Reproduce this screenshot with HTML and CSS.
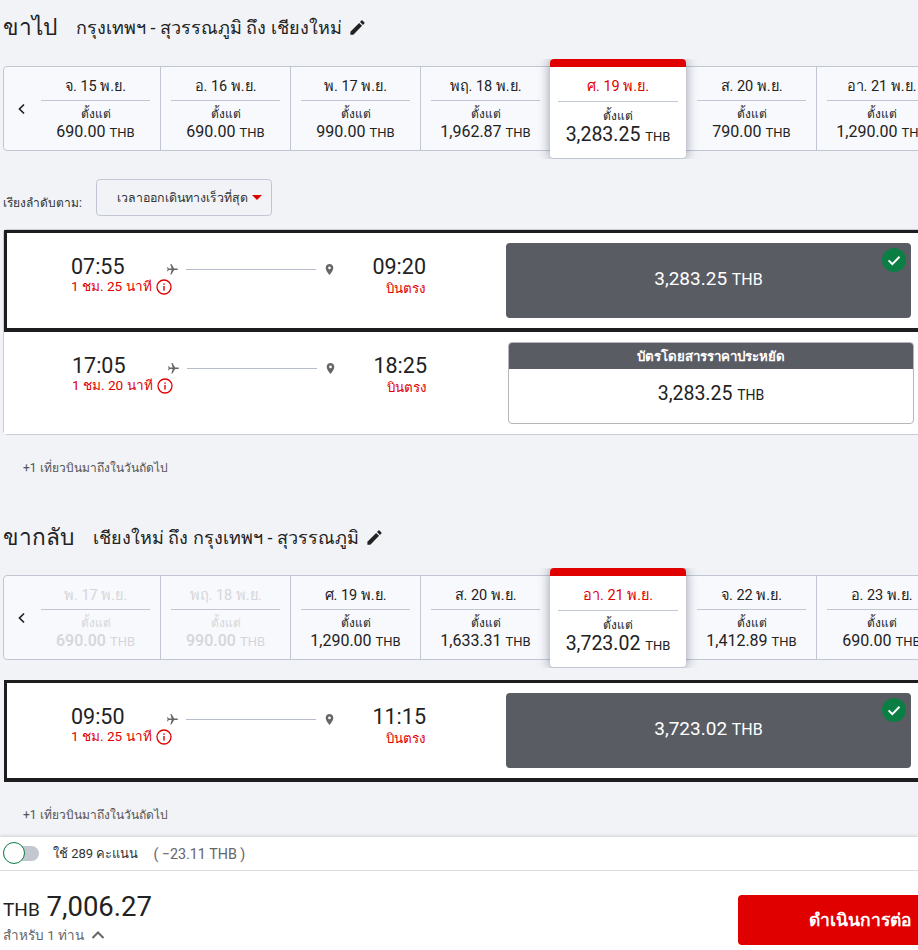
FILE: index.html
```html
<!DOCTYPE html>
<html lang="th">
<head>
<meta charset="utf-8">
<title>เลือกเที่ยวบิน</title>
<link rel="stylesheet" href="styles.css">
</head>
<body>
<svg class="defs" width="0" height="0">
	<symbol id="edit" viewBox="0 0 24 24"><path d="M3 17.25V21h3.75L17.81 9.94l-3.75-3.75L3 17.25zM20.71 7.04a1 1 0 0 0 0-1.41l-2.34-2.34a1 1 0 0 0-1.41 0l-1.83 1.83 3.75 3.75 1.83-1.83z"/></symbol>
	<symbol id="plane" viewBox="0 0 24 24"><path d="M21 16v-2l-8-5V3.5a1.5 1.5 0 0 0-3 0V9l-8 5v2l8-2.5V19l-2 1.5V22l3.5-1 3.5 1v-1.5L13 19v-5.5l8 2.5z" transform="rotate(90 12 12)"/></symbol>
	<symbol id="pin" viewBox="0 0 24 24"><path d="M12 2C8.13 2 5 5.13 5 9c0 5.25 7 13 7 13s7-7.75 7-13c0-3.87-3.13-7-7-7zm0 9.5a2.5 2.5 0 1 1 0-5 2.5 2.5 0 0 1 0 5z"/></symbol>
	<symbol id="info" viewBox="0 0 16 16"><circle cx="8" cy="8" r="7" fill="none" stroke="currentColor" stroke-width="1.3"/><rect x="7.3" y="7" width="1.4" height="4.6" fill="currentColor"/><rect x="7.3" y="4.4" width="1.4" height="1.4" fill="currentColor"/></symbol>
	<symbol id="check" viewBox="0 0 24 24"><circle cx="12" cy="12" r="12" fill="#0b7e43"/><path d="M6.6 12.4l3.7 3.7 7.2-7.4" fill="none" stroke="#fff" stroke-width="2"/></symbol>
</svg>

<div class="page">
	<h2 class="leg-title"><span class="leg-name">ขาไป</span><span class="leg-route">กรุงเทพฯ - สุวรรณภูมิ ถึง เชียงใหม่</span><svg class="edit-icon"><use href="#edit"/></svg></h2>

	<div class="strip">
		<div class="prev"><svg width="12" height="12" viewBox="0 0 12 12"><path d="M8 1.5L3.5 6 8 10.5" fill="none" stroke="#222" stroke-width="1.7"/></svg></div>
		<div class="day first"><div class="day-date">จ. 15 พ.ย.</div><div class="day-from">ตั้งแต่</div><div class="day-price">690.00 <small>THB</small></div></div>
		<div class="day"><div class="day-date">อ. 16 พ.ย.</div><div class="day-from">ตั้งแต่</div><div class="day-price">690.00 <small>THB</small></div></div>
		<div class="day"><div class="day-date">พ. 17 พ.ย.</div><div class="day-from">ตั้งแต่</div><div class="day-price">990.00 <small>THB</small></div></div>
		<div class="day before-sel"><div class="day-date">พฤ. 18 พ.ย.</div><div class="day-from">ตั้งแต่</div><div class="day-price">1,962.87 <small>THB</small></div></div>
		<div class="day selected"><div class="day-date">ศ. 19 พ.ย.</div><div class="day-from">ตั้งแต่</div><div class="day-price">3,283.25 <small>THB</small></div></div>
		<div class="day"><div class="day-date">ส. 20 พ.ย.</div><div class="day-from">ตั้งแต่</div><div class="day-price">790.00 <small>THB</small></div></div>
		<div class="day"><div class="day-date">อา. 21 พ.ย.</div><div class="day-from">ตั้งแต่</div><div class="day-price">1,290.00 <small>THB</small></div></div>
	</div>

	<div class="sort">
		<span class="sort-label">เรียงลำดับตาม:</span>
		<div class="sort-box">เวลาออกเดินทางเร็วที่สุด<i class="caret"></i></div>
	</div>

	<div class="flights">
		<div class="flight active">
			<div class="flight-info">
				<div class="dep"><div class="time">07:55</div><div class="dur">1 ชม. 25 นาที<svg class="info"><use href="#info"/></svg></div></div>
				<div class="route"><svg class="plane"><use href="#plane"/></svg><i class="route-line"></i><svg class="pin"><use href="#pin"/></svg></div>
				<div class="arr"><div class="time">09:20</div><div class="direct">บินตรง</div></div>
			</div>
			<div class="fare fare-on">3,283.25 <small>THB</small><svg class="tick"><use href="#check"/></svg></div>
		</div>
		<div class="flight plain">
			<div class="flight-info">
				<div class="dep"><div class="time">17:05</div><div class="dur">1 ชม. 20 นาที<svg class="info"><use href="#info"/></svg></div></div>
				<div class="route"><svg class="plane"><use href="#plane"/></svg><i class="route-line"></i><svg class="pin"><use href="#pin"/></svg></div>
				<div class="arr"><div class="time">18:25</div><div class="direct">บินตรง</div></div>
			</div>
			<div class="fare-card"><div class="fare-head">บัตรโดยสารราคาประหยัด</div><div class="fare-body">3,283.25 <small>THB</small></div></div>
		</div>
	</div>
	<p class="note">+1 เที่ยวบินมาถึงในวันถัดไป</p>

	<h2 class="leg-title second"><span class="leg-name">ขากลับ</span><span class="leg-route">เชียงใหม่ ถึง กรุงเทพฯ - สุวรรณภูมิ</span><svg class="edit-icon"><use href="#edit"/></svg></h2>

	<div class="strip">
		<div class="prev"><svg width="12" height="12" viewBox="0 0 12 12"><path d="M8 1.5L3.5 6 8 10.5" fill="none" stroke="#222" stroke-width="1.7"/></svg></div>
		<div class="day first off"><div class="day-date">พ. 17 พ.ย.</div><div class="day-from">ตั้งแต่</div><div class="day-price">690.00 <small>THB</small></div></div>
		<div class="day off"><div class="day-date">พฤ. 18 พ.ย.</div><div class="day-from">ตั้งแต่</div><div class="day-price">990.00 <small>THB</small></div></div>
		<div class="day"><div class="day-date">ศ. 19 พ.ย.</div><div class="day-from">ตั้งแต่</div><div class="day-price">1,290.00 <small>THB</small></div></div>
		<div class="day before-sel"><div class="day-date">ส. 20 พ.ย.</div><div class="day-from">ตั้งแต่</div><div class="day-price">1,633.31 <small>THB</small></div></div>
		<div class="day selected"><div class="day-date">อา. 21 พ.ย.</div><div class="day-from">ตั้งแต่</div><div class="day-price">3,723.02 <small>THB</small></div></div>
		<div class="day"><div class="day-date">จ. 22 พ.ย.</div><div class="day-from">ตั้งแต่</div><div class="day-price">1,412.89 <small>THB</small></div></div>
		<div class="day"><div class="day-date">อ. 23 พ.ย.</div><div class="day-from">ตั้งแต่</div><div class="day-price">690.00 <small>THB</small></div></div>
	</div>

	<div class="flights solo">
		<div class="flight active">
			<div class="flight-info">
				<div class="dep"><div class="time">09:50</div><div class="dur">1 ชม. 25 นาที<svg class="info"><use href="#info"/></svg></div></div>
				<div class="route"><svg class="plane"><use href="#plane"/></svg><i class="route-line"></i><svg class="pin"><use href="#pin"/></svg></div>
				<div class="arr"><div class="time">11:15</div><div class="direct">บินตรง</div></div>
			</div>
			<div class="fare fare-on">3,723.02 <small>THB</small><svg class="tick"><use href="#check"/></svg></div>
		</div>
	</div>
	<p class="note">+1 เที่ยวบินมาถึงในวันถัดไป</p>

	<div class="footer">
		<div class="points">
			<span class="toggle"><i class="knob"></i></span>
			<span class="points-text">ใช้ 289 คะแนน</span>
			<span class="points-value">( −23.11 THB )</span>
		</div>
		<div class="total">
			<div>
				<div class="total-price"><small>THB</small> 7,006.27</div>
				<div class="total-for">สำหรับ 1 ท่าน<svg width="14" height="10" viewBox="0 0 14 10"><path d="M1.5 8L7 2.5 12.5 8" fill="none" stroke="#666" stroke-width="2"/></svg></div>
			</div>
			<div class="go">ดำเนินการต่อ</div>
		</div>
	</div>
</div>
</body>
</html>
```

FILE: styles.css
```css
html, body {
	margin: 0;
	height: 950px;
	overflow: hidden;
}
body {
	font-family: Roboto, "Noto Sans", "Noto Sans CJK SC", sans-serif;
	color: #222;
	background-color: #f1f3f7;
}
.defs {
	display: block;
}
.page {
	width: 918px;
	height: 950px;
	overflow: hidden;
}
/* headings */
.leg-title {
	display: flex;
	align-items: center;
	height: 30px;
	margin: 0;
	padding: 12px 0 0 3px;
	font-weight: normal;
}
.leg-title.second {
	margin-top: 33px;
}
.leg-name {
	font-size: 22.7px;
	margin-right: 19px;
}
.leg-route {
	font-size: 18px;
}
.edit-icon {
	width: 19px;
	height: 19px;
	margin-left: 6px;
	fill: #222;
}
/* date strip */
.strip {
	display: flex;
	width: 960px;
	height: 85px;
	box-sizing: border-box;
	margin: 24px 0 0 3px;
	background-color: #f8f9fd;
	border: 1px solid #c1c7d2;
	border-radius: 4px 0 0 4px;
}
.second + .strip {
	margin-top: 23px;
}
.prev {
	flex: none;
	width: 37px;
	display: flex;
	align-items: center;
	justify-content: center;
	box-sizing: border-box;
	padding-right: 2px;
}
.day {
	flex: none;
	width: 130px;
	box-sizing: border-box;
	padding: 0 10px;
	border-right: 1px solid #c1c7d2;
	text-align: center;
}
.day.first {
	width: 120px;
	padding: 0 10px 0 0;
}
.day.before-sel {
	width: 129px;
	border-right: 0;
}
.day-date {
	height: 33px;
	line-height: 40px;
	font-size: 14.5px;
	border-bottom: 1px solid #c1c7d2;
}
.day-from {
	margin-top: 5px;
	font-size: 12px;
	line-height: 17px;
}
.day-price {
	font-size: 16px;
	line-height: 17px;
}
.day-price small {
	font-size: 13px;
}
.day.off {
	color: #d5d6d9;
}
.day.off .day-price {
	font-weight: 500;
}
.day.off .day-price small {
	font-weight: 400;
}
.day.selected {
	position: relative;
	width: 136px;
	height: 100px;
	margin: -8px 1px 0 0;
	padding: 8px 8px 0;
	background-color: #fff;
	border: 0;
	border-radius: 4px;
	box-shadow: 0 0 12px rgba(60, 70, 90, .55);
	clip-path: inset(0 -20px);
	border-bottom: 1px solid #c1c7d2;
}
.day.selected::before {
	content: "";
	display: block;
	height: 8px;
	margin: -8px -8px 0;
	background-color: #e00000;
	border-radius: 4px 4px 0 0;
}
.selected .day-date {
	color: #e00000;
	height: 34px;
	line-height: 40px;
}
.selected .day-from {
	margin-top: 6px;
}
.selected .day-price {
	font-size: 19.5px;
	line-height: 20px;
}
/* sort */
.sort {
	display: flex;
	align-items: center;
	margin: 28px 0 0 3px;
	height: 37px;
}
.sort-label {
	width: 93px;
	padding-top: 9px;
	font-size: 12px;
	color: #333;
}
.sort-box {
	height: 37px;
	width: 176px;
	box-sizing: border-box;
	border: 1px solid #c1c7d2;
	border-radius: 4px;
	padding-left: 20px;
	line-height: 35px;
	font-size: 12.4px;
	color: #333;
	white-space: nowrap;
}
.caret {
	display: inline-block;
	margin-left: 4px;
	vertical-align: 2px;
	border: 5px solid transparent;
	border-top: 5px solid #e00000;
	border-bottom: 0;
}
/* flights */
.flights {
	width: 930px;
	margin: 13px 0 0 3px;
	background-color: #fff;
	border: 1px solid #c9ccd2;
	border-radius: 4px;
}
.flights.solo {
	border: 0;
	margin-top: 20px;
	background-color: transparent;
}
.flight {
	display: flex;
	height: 102px;
	box-sizing: border-box;
	background-color: #fff;
}
.flight.active {
	border: 3px solid #1d1d1f;
	border-bottom-width: 4px;
	padding: 10px 0 0 64px;
}
.solo .flight.active {
	margin-left: 1px;
}
.flight.plain {
	padding: 10px 0 0 68px;
}
.flight-info {
	display: flex;
	width: 355px;
	height: 61px;
	padding-top: 12px;
}
.dep {
	width: 95px;
}
.time {
	font-size: 21.5px;
	line-height: 23px;
}
.dur {
	display: flex;
	align-items: center;
	font-size: 13.6px;
	line-height: 17px;
	color: #e00000;
	white-space: nowrap;
}
.info {
	width: 16px;
	height: 16px;
	margin-left: 4px;
	color: #e00000;
	flex: none;
}
.route {
	display: flex;
	align-items: center;
	height: 24px;
	width: 170px;
	margin-top: 2px;
	color: #666;
}
.plane {
	width: 13px;
	height: 13px;
	margin-right: 7px;
	fill: #666;
	flex: none;
}
.route-line {
	flex: none;
	width: 130px;
	height: 1px;
	background-color: #b6bccb;
}
.pin {
	width: 13px;
	height: 13px;
	margin-left: 7px;
	fill: #666;
	flex: none;
}
.arr {
	margin-left: auto;
	text-align: right;
}
.direct {
	font-size: 13.4px;
	line-height: 21px;
	color: #e00000;
}
.fare {
	position: relative;
	margin: 0 0 0 80px;
	width: 405px;
	height: 75px;
	border-radius: 4px;
	text-align: center;
	line-height: 71px;
	font-size: 19px;
	flex: none;
}
.fare small {
	font-size: 16px;
}
.fare-on {
	background-color: #5a5c64;
	color: #fff;
}
.tick {
	position: absolute;
	top: 5px;
	right: 5px;
	width: 24px;
	height: 24px;
}
.fare-card {
	flex: none;
	width: 406px;
	height: 82px;
	box-sizing: border-box;
	margin-left: 81px;
	border: 1px solid #b4b6ba;
	border-radius: 4px;
	overflow: hidden;
	text-align: center;
}
.fare-head {
	height: 26px;
	line-height: 27px;
	background-color: #5a5c64;
	color: #fff;
	font-size: 13.3px;
	font-weight: bold;
}
.fare-body {
	font-size: 19.5px;
	line-height: 50px;
}
.fare-body small {
	font-size: 14px;
}
.note {
	margin: 25px 0 0 23px;
	font-size: 12px;
	line-height: 17px;
	color: #555;
}
/* footer */
.footer {
	margin-top: 13px;
	background-color: #fff;
	height: 114px;
	box-shadow: 0 -1px 3px rgba(0, 0, 0, .15);
}
.points {
	display: flex;
	align-items: center;
	height: 34px;
	box-sizing: border-box;
	border-bottom: 1px solid #dcdcdc;
	padding-left: 3px;
}
.toggle {
	display: block;
	position: relative;
	width: 36px;
	height: 15px;
	border-radius: 8px;
	background-color: #c3c7cf;
}
.knob {
	position: absolute;
	left: 0;
	top: -4px;
	width: 22px;
	height: 22px;
	box-sizing: border-box;
	border: 1.5px solid #0b7e43;
	border-radius: 50%;
	background-color: #fff;
}
.points-text {
	margin-left: 14px;
	font-size: 13px;
	color: #333;
}
.points-value {
	margin-left: 15px;
	font-size: 14.3px;
	color: #666;
}
.total {
	display: flex;
	justify-content: space-between;
	padding-left: 3px;
}
.total-price {
	margin-top: 21px;
	font-size: 27.5px;
	line-height: 30px;
	color: #222;
}
.total-price small {
	font-size: 19px;
}
.total-for {
	display: flex;
	align-items: center;
	margin-top: 1px;
	font-size: 13.5px;
	line-height: 18px;
	color: #666;
}
.total-for svg {
	margin-left: 7px;
}
.go {
	flex: none;
	width: 180px;
	height: 50px;
	margin-top: 24px;
	background-color: #e00000;
	color: #fff;
	border-radius: 4px 0 0 4px;
	padding-left: 71px;
	box-sizing: border-box;
	line-height: 50px;
	font-size: 17.5px;
	font-weight: bold;
	white-space: nowrap;
}
```
